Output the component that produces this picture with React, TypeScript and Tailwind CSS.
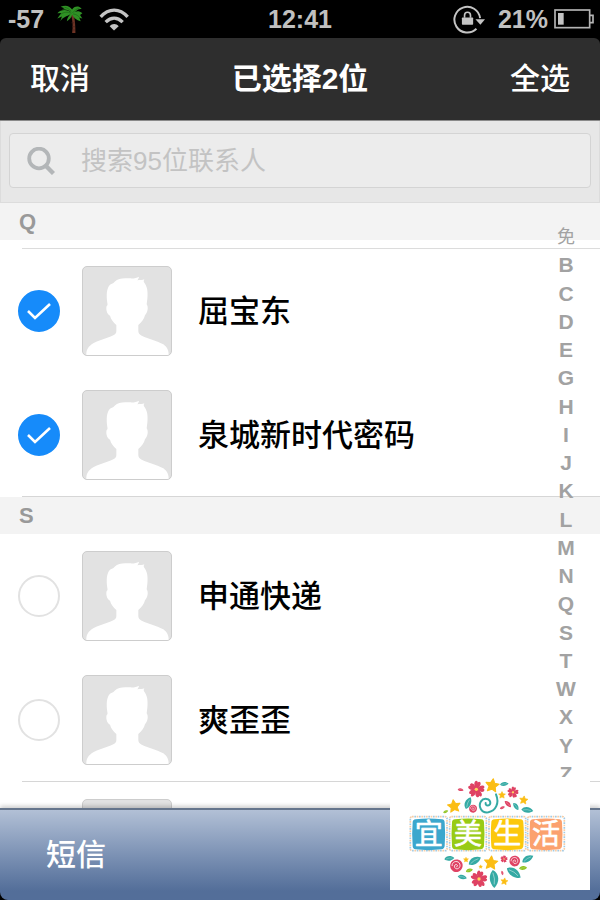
import { useState } from "react";

interface Contact {
    id: number;
    name: string;
}

interface Section {
    letter: string;
    contacts: Contact[];
}

const sections: Section[] = [
    {
        letter: "Q",
        contacts: [
            { id: 1, name: "屈宝东" },
            { id: 2, name: "泉城新时代密码" },
        ],
    },
    {
        letter: "S",
        contacts: [
            { id: 3, name: "申通快递" },
            { id: 4, name: "爽歪歪" },
        ],
    },
];

const indexLetters = "免BCDEGHIJKLMNQSTWXYZ".split("");

const PalmIcon = () => (
    <svg viewBox="170 6 82 88" className="h-[29px] w-[27px]" aria-hidden="true">
        <path d="M215 34 C221 52 222 72 219 91 L229 91 C229 70 228 50 223 33Z" fill="#6d3324" />
        <path d="M217 60h9M219 72h9M219 82h9" stroke="#47201a" strokeWidth="2" />
        <path
            d="M216 29 C205 18 185 18 174 31 L186 30 L174 47 L188 41 L183 55 C192 42 202 41 214 34 C208 40 203 48 203 55 C212 50 217 43 219 35 C224 46 232 52 245 55 L241 45 L250 47 L243 36 L250 31 C240 23 233 24 226 28 L237 20 L248 17 C237 6 224 11 219 20 C211 6 196 6 184 11 L196 16 L188 19 C200 19 211 22 216 29Z"
            fill="#2f9125"
        />
        <path d="M217 31 C204 26 194 27 183 35M220 30 C227 22 233 17 241 15M222 33 C231 34 239 39 243 46M216 25 C210 18 203 14 196 13" fill="none" stroke="#1a6613" strokeWidth="2" />
    </svg>
);

const WifiIcon = () => (
    <svg viewBox="298 20 90 68" className="h-[23px] w-[30px]" fill="none" stroke="#c4c4c4" strokeWidth="10" aria-hidden="true">
        <path d="M303 46 C327 19 360 19 384 46" />
        <path d="M318 62 C334 46 353 46 369 62" />
        <path d="M343 87 L330 74 C337 65 350 65 357 74Z" fill="#c4c4c4" stroke="none" />
    </svg>
);

const RotationLockIcon = () => (
    <svg viewBox="456 8 100 92" className="h-[31px] w-[33px]" aria-hidden="true">
        <path d="M527 82 A39 39 0 1 1 538 50" fill="none" stroke="#c4c4c4" strokeWidth="6" />
        <path d="M524 53H553L539 70Z" fill="#c4c4c4" />
        <rect x="483" y="48" width="34" height="22" rx="2" fill="#c4c4c4" />
        <path d="M491 49V41a9 9 0 0 1 18 0V49" fill="none" stroke="#c4c4c4" strokeWidth="5" />
    </svg>
);

const BatteryIcon = () => (
    <svg viewBox="764 24 120 60" className="h-5 w-10" aria-hidden="true">
        <rect x="767" y="27" width="104" height="53" fill="none" stroke="#b4b4b4" strokeWidth="5" />
        <path d="M872 43h9v22h-9" fill="none" stroke="#b4b4b4" strokeWidth="5" />
        <rect x="776" y="36" width="17" height="35" fill="#c4c4c4" />
    </svg>
);

const Avatar = () => (
    <span className="block size-[90px] shrink-0 overflow-hidden rounded-[5px] border border-[#cdcdcd] bg-[#e2e2e2]">
        <svg viewBox="250 36 264 264" className="block size-full" aria-hidden="true">
            <path
                d="M260 300 C260 286 264 277 276 268 C296 255 320 251 341 241 Q350 237 350 228 V210 C341 202 334 193 331 182 C322 178 318 163 321 153 C324 151 324 148 323 144 C320 121 320 101 331 89 C336 85 342 85 345 80 C356 68 374 69 390 70 C402 71 410 69 418 65 C417 70 416 73 412 76 C421 75 429 75 434 73 C431 78 432 81 435 85 C446 99 445 124 441 148 C447 157 444 172 436 181 C433 193 426 202 416 210 V228 Q416 237 426 242 C447 252 473 257 491 268 C503 277 507 287 507 300Z"
                fill="#fff"
            />
        </svg>
    </span>
);

interface ContactRowProps {
    contact: Contact;
    checked: boolean;
    onToggle: (id: number) => void;
}

const ContactRow = ({ contact, checked, onToggle }: ContactRowProps) => {
    return (
        <li className="h-31 border-[#d6d6d6] pt-[17px] last:border-b">
            <label className="flex h-[90px] cursor-pointer items-center">
                <span className="-ml-1 grid size-[42px] shrink-0 place-items-center">
                    <input
                        type="checkbox"
                        checked={checked}
                        onChange={() => onToggle(contact.id)}
                        className="col-start-1 row-start-1 size-[42px] appearance-none rounded-full border-2 border-[#e2e2e2] bg-white checked:border-[#168bfa] checked:bg-[#168bfa]"
                    />
                    {checked && (
                        <svg viewBox="0 0 42 42" className="pointer-events-none z-10 col-start-1 row-start-1 size-[42px]" aria-hidden="true">
                            <path d="M10 21l7 7L32 14" fill="none" stroke="#fff" strokeWidth="2.6" />
                        </svg>
                    )}
                </span>
                <span className="ml-[22px]">
                    <Avatar />
                </span>
                <span className="ml-[26px] pt-0.5 text-[31px] leading-10 font-medium text-black">{contact.name}</span>
            </label>
        </li>
    );
};

// five-petal flower used around the logo
const Flower = ({ x, y, r }: { x: number; y: number; r: number }) => (
    <g transform={`translate(${x} ${y})`}>
        {[0, 72, 144, 216, 288].map((a) => (
            <path
                key={a}
                transform={`rotate(${a + 12}) scale(${r / 24})`}
                d="M0 0 C-10 -8 -12 -22 -5 -24 Q-1 -24 0 -20 Q3 -25 7 -22 C12 -16 7 -6 0 0Z"
                fill="#df4263"
            />
        ))}
        <circle r={r / 5} fill="#ffd75e" />
    </g>
);

const Star = ({ x, y, r, turn = 0 }: { x: number; y: number; r: number; turn?: number }) => (
    <path
        transform={`translate(${x} ${y}) rotate(${turn}) scale(${r / 20})`}
        d="M0 -19 L6 -7 L19 -6 L9 4 L12 17 L0 11 L-12 17 L-9 4 L-19 -6 L-6 -7Z"
        fill="#fbbd14"
        stroke="#fbbd14"
        strokeWidth="3"
        strokeLinejoin="round"
    />
);

const Leaf = ({ x, y, r, turn, color = "#35aaa4" }: { x: number; y: number; r: number; turn: number; color?: string }) => (
    <g transform={`translate(${x} ${y}) rotate(${turn}) scale(${r / 20})`}>
        <path d="M-20 2 C-12 -13 8 -13 20 0 C8 12 -10 12 -20 2Z" fill={color} />
        <path d="M-14 2 Q0 -3 12 0" fill="none" stroke="#fff" strokeWidth="1" />
    </g>
);

const Rosette = ({ x, y, r }: { x: number; y: number; r: number }) => (
    <g transform={`translate(${x} ${y}) scale(${r / 18})`}>
        <path d="M-17 -4 C-14 -18 4 -22 14 -12 C23 -2 16 16 3 18 C-10 20 -20 8 -17 -4Z" fill="#df4263" />
        <path d="M-12 1 C-13 -11 1 -16 8 -8 C15 2 6 12 -2 8 C-9 3 -4 -5 1 -3 C5 -1 3 4 0 3" fill="none" stroke="#fff" strokeWidth="2.4" />
    </g>
);

const tiles = [
    { char: "宜", x: 97, color: "#3ca7cd" },
    { char: "美", x: 215, color: "#98cb15" },
    { char: "生", x: 333, color: "#fcc80c" },
    { char: "活", x: 449, color: "#fba16e" },
];

const Logo = () => (
    <svg viewBox="30 51 600 339" className="block w-full" role="img" aria-label="宜美生活">
        <Flower x={289} y={88} r={25} />
        <Flower x={399} y={97} r={17} />
        <Star x={337} y={76} r={21} turn={8} />
        <Star x={222} y={138} r={20} turn={-8} />
        <Star x={366} y={105} r={11} />
        <Star x={431} y={120} r={13} turn={8} />
        <Leaf x={264} y={129} r={19} turn={-65} />
        <Leaf x={373} y={72} r={13} turn={-5} />
        <Leaf x={408} y={139} r={13} turn={58} />
        <Leaf x={442} y={150} r={18} turn={10} />
        <Leaf x={197} y={155} r={8} turn={-20} color="#8fc31f" />
        <Leaf x={242} y={89} r={9} turn={10} color="#df4263" />
        <Leaf x={384} y={132} r={13} turn={48} color="#df4263" />
        <Leaf x={367} y={143} r={8} turn={-20} color="#df4263" />
        <Rosette x={279} y={146} r={12} />
        <path
            d="M348 103 C359 130 347 153 325 157 C303 160 294 139 303 124 C311 112 331 115 331 129 C330 139 315 139 317 129"
            fill="none"
            stroke="#35aaa4"
            strokeWidth="6"
            strokeLinecap="round"
        />

        {tiles.map((tile) => (
            <g key={tile.char}>
                <rect x={tile.x - 6} y="170" width="110" height="102" rx="5" fill="none" stroke="#f7cda6" strokeWidth="5" strokeDasharray="5 9" />
                <rect x={tile.x - 6} y="170" width="110" height="102" rx="5" fill="none" stroke="#a3cbe4" strokeWidth="5" strokeDasharray="5 9" strokeDashoffset="7" />
                <path
                    transform={`translate(${tile.x} 175)`}
                    d="M10 3 Q49 -2 89 3 Q97 4 97 13 Q100 47 97 83 Q96 92 87 93 Q49 98 10 93 Q1 92 1 83 Q-2 47 1 12 Q1 4 10 3Z"
                    fill={tile.color}
                />
                <text x={tile.x + 49} y="253" textAnchor="middle" fontSize="84" fontWeight="400" fill="#fff" stroke="#fff" strokeWidth="2" strokeLinejoin="round">
                    {tile.char}
                </text>
            </g>
        ))}

        <Leaf x={208} y={295} r={15} turn={-5} />
        <Leaf x={284} y={302} r={21} turn={-28} />
        <Leaf x={443} y={296} r={19} turn={-28} />
        <Leaf x={402} y={338} r={25} turn={38} />
        <Leaf x={342} y={357} r={27} turn={88} />
        <Leaf x={247} y={351} r={14} turn={15} />
        <Leaf x={268} y={331} r={11} turn={-15} color="#8fc31f" />
        <Leaf x={429} y={324} r={12} turn={-5} color="#8fc31f" />
        <Leaf x={367} y={339} r={7} turn={80} color="#df4263" />
        <Rosette x={229} y={317} r={19} />
        <Rosette x={404} y={303} r={16} />
        <Star x={333} y={308} r={21} turn={5} />
        <Star x={258} y={299} r={8} />
        <Star x={302} y={320} r={6} />
        <Star x={373} y={364} r={11} turn={8} />
        <Flower x={297} y={357} r={25} />
        <Flower x={372} y={297} r={11} />
    </svg>
);

const App = () => {
    const [selected, setSelected] = useState<number[]>([1, 2]);
    const [query, setQuery] = useState("");

    const toggle = (id: number) => {
        setSelected((prev) => (prev.includes(id) ? prev.filter((n) => n !== id) : [...prev, id]));
    };

    const selectAll = () => {
        setSelected(sections.flatMap((s) => s.contacts.map((c) => c.id)));
    };

    return (
        <div className="relative flex h-screen flex-col overflow-hidden bg-black font-['Liberation_Sans','Noto_Sans_CJK_SC',sans-serif]">
            {/* Status bar */}
            <div className="grid h-[38px] shrink-0 grid-cols-3 items-center px-1.5 text-[25px] leading-9 font-bold text-[#c0c0c0]">
                <div className="flex items-center pl-0.5">
                    <span>-57</span>
                    <span className="ml-3">
                        <PalmIcon />
                    </span>
                    <span className="ml-4">
                        <WifiIcon />
                    </span>
                </div>
                <time className="text-center">12:41</time>
                <div className="flex items-center justify-end">
                    <RotationLockIcon />
                    <span className="mr-1.5 ml-3">21%</span>
                    <BatteryIcon />
                </div>
            </div>

            {/* Title bar */}
            <header className="grid h-[83px] shrink-0 grid-cols-[1fr_auto_1fr] items-center rounded-t-md border-b border-[#8a8a8a] bg-[#2e2e2e] px-[30px] text-white">
                <button type="button" className="justify-self-start text-[30px] leading-10 font-medium">
                    取消
                </button>
                <h1 className="text-[30px] leading-10 font-bold">已选择{selected.length}位</h1>
                <button type="button" onClick={selectAll} className="justify-self-end text-[30px] leading-10 font-medium">
                    全选
                </button>
            </header>

            {/* Search */}
            <div className="h-[82px] shrink-0 border-x border-b border-[#dcdcdc] bg-[#e7e7e7] px-2 pt-3">
                <label className="flex h-[55px] items-center rounded border border-[#d4d4d4] bg-[#ececec] pl-[17px]">
                    <svg viewBox="0 0 28 28" className="size-7 shrink-0" fill="none" stroke="#b3b6b8" aria-hidden="true">
                        <circle cx="12" cy="11.5" r="9.8" strokeWidth="3.8" />
                        <path d="M18.5 18.5l8 8" strokeWidth="4.4" />
                    </svg>
                    <input
                        type="search"
                        aria-label="搜索联系人"
                        placeholder="搜索95位联系人"
                        value={query}
                        onChange={(e) => setQuery(e.target.value)}
                        className="ml-[26px] min-w-0 flex-1 bg-transparent text-[26px] leading-9 text-[#555] outline-none placeholder:text-[#c3c3c3]"
                    />
                </label>
            </div>

            {/* Contacts */}
            <main className="relative min-h-0 flex-1 overflow-hidden bg-white">
                {sections.map((section, i) => (
                    <section key={section.letter} id={section.letter}>
                        <h2 className="h-[37px] bg-[#f3f3f3] pl-[19px] text-[22px] leading-[38px] font-bold text-[#999]">{section.letter}</h2>
                        {i === 0 && <div className="ml-[22px] h-[9px] border-b border-[#dcdcdc]" />}
                        <ul className="ml-[22px]">
                            {section.contacts.map((contact) => (
                                <ContactRow key={contact.id} contact={contact} checked={selected.includes(contact.id)} onToggle={toggle} />
                            ))}
                        </ul>
                    </section>
                ))}
                <div className="pt-[17px] pl-[82px]">
                    <Avatar />
                </div>

                <nav className="absolute top-5 right-5 bottom-5 flex w-7 flex-col justify-between text-center text-[21px] font-bold text-[#a2a2a2]">
                    {indexLetters.map((letter) => (
                        <a key={letter} href={`#${letter}`} className="leading-7 first:text-lg first:leading-7 first:font-normal">
                            {letter}
                        </a>
                    ))}
                </nav>
            </main>

            {/* Bottom toolbar */}
            <footer className="z-10 flex h-[92px] shrink-0 items-center rounded-b-lg border-t-2 border-[#65758c] bg-linear-to-b from-[#b2c0d6] to-[#536e99] to-90% pl-[46px] shadow-[0_-2px_4px_rgba(0,0,0,0.2)]">
                <button type="button" className="text-[30px] leading-10 font-medium text-white">
                    短信
                </button>
            </footer>

            <div className="absolute right-2.5 bottom-2.5 z-20 w-[200px] bg-white">
                <Logo />
            </div>
        </div>
    );
};

export default App;
